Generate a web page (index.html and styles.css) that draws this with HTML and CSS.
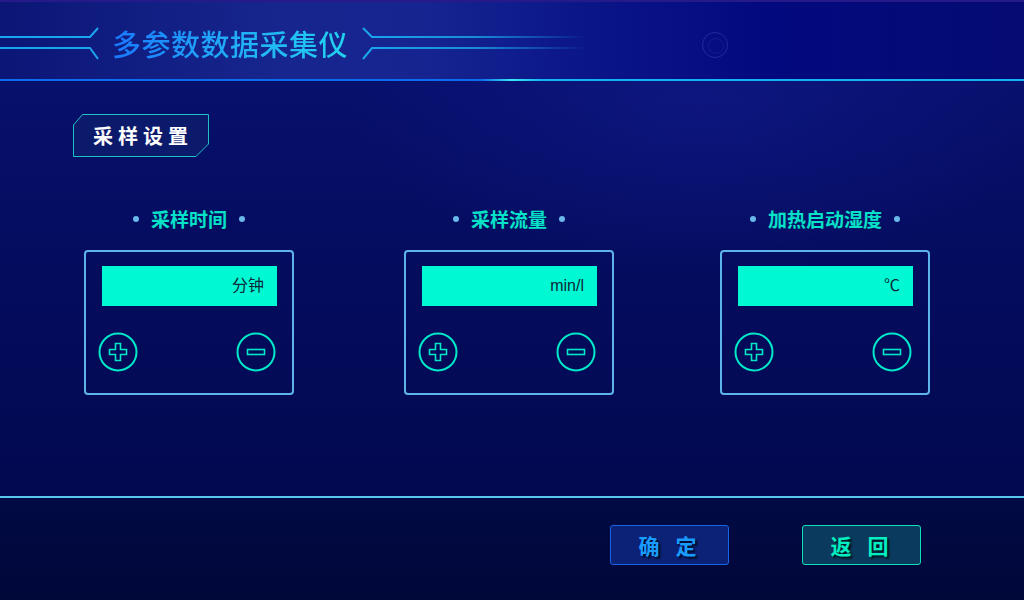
FILE: index.html
```html
<!DOCTYPE html>
<html lang="zh">
<head>
<meta charset="utf-8">
<title>多参数数据采集仪</title>
<link rel="stylesheet" href="styles.css">
</head>
<body>
<div class="screen">
  <header class="header">
    <svg class="deco-left" width="100" height="34" viewBox="0 0 100 34">
      <path d="M0 11 H90 L98 2 M0 22 H90 L98 33" fill="none" stroke="#1aa6ee" stroke-width="2"/>
    </svg>
    <h1 class="title">多参数数据采集仪</h1>
    <svg class="deco-right" width="225" height="34" viewBox="0 0 225 34">
      <defs>
        <linearGradient id="fade" x1="0" y1="0" x2="225" y2="0" gradientUnits="userSpaceOnUse">
          <stop offset="0" stop-color="#1aa6ee"/>
          <stop offset="0.5" stop-color="#1aa6ee" stop-opacity="0.8"/>
          <stop offset="1" stop-color="#1aa6ee" stop-opacity="0"/>
        </linearGradient>
      </defs>
      <path d="M1 2 L10 11 H225 M1 33 L10 22 H225" fill="none" stroke="url(#fade)" stroke-width="2"/>
    </svg>
    <span class="ring"></span>
  </header>
  <div class="hline"></div>

  <main class="main">
    <div class="tag">
      <svg class="tag-frame" width="136" height="43" viewBox="0 0 136 43">
        <polygon points="9.5,0.5 135.5,0.5 135.5,30 123,42.5 0.5,42.5 0.5,11" fill="#0c1a6c" stroke="#1ec2c2" stroke-width="1"/>
      </svg>
      <span class="tag-text">采样设置</span>
    </div>

    <div class="panels">
      <section class="panel">
        <h2 class="panel-title"><i class="dot"></i>采样时间<i class="dot"></i></h2>
        <div class="box">
          <div class="display">分钟</div>
          <div class="controls">
            <svg class="btn-icon" width="40" height="40" viewBox="0 0 40 40">
              <circle cx="20" cy="20" r="18.5" fill="none" stroke="#00e8c8" stroke-width="2"/>
              <path d="M17.5 11.5 H22.5 V17.5 H28.5 V22.5 H22.5 V28.5 H17.5 V22.5 H11.5 V17.5 H17.5 Z" fill="none" stroke="#00e8c8" stroke-width="1.6"/>
            </svg>
            <svg class="btn-icon" width="40" height="40" viewBox="0 0 40 40">
              <circle cx="20" cy="20" r="18.5" fill="none" stroke="#00e8c8" stroke-width="2"/>
              <rect x="11.5" y="17.5" width="17" height="5" fill="none" stroke="#00e8c8" stroke-width="1.6"/>
            </svg>
          </div>
        </div>
      </section>

      <section class="panel panel-mid">
        <h2 class="panel-title"><i class="dot"></i>采样流量<i class="dot"></i></h2>
        <div class="box">
          <div class="display">min/l</div>
          <div class="controls">
            <svg class="btn-icon" width="40" height="40" viewBox="0 0 40 40">
              <circle cx="20" cy="20" r="18.5" fill="none" stroke="#00e8c8" stroke-width="2"/>
              <path d="M17.5 11.5 H22.5 V17.5 H28.5 V22.5 H22.5 V28.5 H17.5 V22.5 H11.5 V17.5 H17.5 Z" fill="none" stroke="#00e8c8" stroke-width="1.6"/>
            </svg>
            <svg class="btn-icon" width="40" height="40" viewBox="0 0 40 40">
              <circle cx="20" cy="20" r="18.5" fill="none" stroke="#00e8c8" stroke-width="2"/>
              <rect x="11.5" y="17.5" width="17" height="5" fill="none" stroke="#00e8c8" stroke-width="1.6"/>
            </svg>
          </div>
        </div>
      </section>

      <section class="panel panel-last">
        <h2 class="panel-title"><i class="dot"></i>加热启动湿度<i class="dot"></i></h2>
        <div class="box">
          <div class="display">℃</div>
          <div class="controls">
            <svg class="btn-icon" width="40" height="40" viewBox="0 0 40 40">
              <circle cx="20" cy="20" r="18.5" fill="none" stroke="#00e8c8" stroke-width="2"/>
              <path d="M17.5 11.5 H22.5 V17.5 H28.5 V22.5 H22.5 V28.5 H17.5 V22.5 H11.5 V17.5 H17.5 Z" fill="none" stroke="#00e8c8" stroke-width="1.6"/>
            </svg>
            <svg class="btn-icon" width="40" height="40" viewBox="0 0 40 40">
              <circle cx="20" cy="20" r="18.5" fill="none" stroke="#00e8c8" stroke-width="2"/>
              <rect x="11.5" y="17.5" width="17" height="5" fill="none" stroke="#00e8c8" stroke-width="1.6"/>
            </svg>
          </div>
        </div>
      </section>
    </div>
  </main>

  <div class="fline"></div>
  <footer class="footer">
    <button class="btn btn-ok">确定</button>
    <button class="btn btn-back">返回</button>
  </footer>
</div>
</body>
</html>
```

FILE: styles.css
```css
* { box-sizing: border-box; }
html, body { margin: 0; padding: 0; }
body {
  width: 1024px;
  height: 600px;
  overflow: hidden;
  background: #020a50;
  font-family: "Noto Sans CJK SC", "Noto Sans", sans-serif;
}
.screen {
  width: 1024px;
  height: 600px;
  display: flex;
  flex-direction: column;
}

/* header */
.header {
  position: relative;
  height: 79px;
  padding-top: 5px;
  display: flex;
  align-items: center;
  border-top: 2px solid #26198a;
  background: linear-gradient(90deg, #0b1676 0%, #17268e 28%, #152490 42%, #0a1588 58%, #02097e 75%, #050b72 100%);
}
.deco-left { flex: none; }
.deco-right { flex: none; margin-left: 14px; }
.title {
  margin: 0 0 0 12px;
  font-size: 29px;
  font-weight: 500;
  line-height: 36px;
  letter-spacing: 0.5px;
  background: linear-gradient(90deg, #1a78ff 0%, #20a8f8 45%, #22d2ee 100%);
  -webkit-background-clip: text;
  background-clip: text;
  color: transparent;
}
.ring {
  position: absolute;
  left: 702px;
  top: 30px;
  width: 26px;
  height: 26px;
  border-radius: 50%;
  border: 1px solid rgba(70, 90, 190, 0.4);
}
.ring::after {
  content: "";
  position: absolute;
  left: 5px;
  top: 5px;
  width: 14px;
  height: 14px;
  border-radius: 50%;
  border: 1px solid rgba(60, 80, 170, 0.25);
}
.hline {
  height: 2px;
  background: linear-gradient(90deg, #0b6cf0 0%, #0b6cf0 47%, #38e8f4 50%, #12b4f2 53%, #12b4f2 100%);
}

/* main */
.main {
  height: 415px;
  padding: 33px 0 0 73px;
  background:
    radial-gradient(ellipse 500px 250px at 700px 20px, rgba(20, 30, 150, 0.45), transparent 70%),
    linear-gradient(180deg, #07106c 0%, #040c5e 45%, #020950 100%);
}
.tag {
  position: relative;
  width: 136px;
  height: 43px;
  display: flex;
  align-items: center;
  padding-left: 20px;
}
.tag-frame { position: absolute; left: 0; top: 0; }
.tag-text {
  position: relative;
  color: #ffffff;
  font-size: 20px;
  font-weight: 700;
  letter-spacing: 5px;
  line-height: 24px;
}

.panels {
  display: flex;
  margin: 50px 0 0 11px;
}
.panel-mid { margin-left: 110px; }
.panel-last { margin-left: 106px; }
.panel {
  width: 210px;
  display: flex;
  flex-direction: column;
  align-items: center;
}
.panel-title {
  margin: 0;
  display: flex;
  align-items: center;
  gap: 12px;
  font-size: 19px;
  font-weight: 700;
  line-height: 24px;
  color: #06e2c8;
}
.dot {
  width: 6px;
  height: 6px;
  border-radius: 50%;
  background: #6ab8ea;
}
.box {
  margin-top: 19px;
  width: 210px;
  height: 145px;
  border: 2px solid #5cb4ea;
  border-radius: 4px;
  padding: 14px 14px 0 12px;
}
.display {
  width: 175px;
  height: 40px;
  margin-left: 4px;
  background: #00f8d2;
  color: #0d2838;
  font-family: "Liberation Sans", "Noto Sans CJK SC", sans-serif;
  font-size: 16px;
  line-height: 40px;
  text-align: right;
  padding-right: 13px;
}
.controls {
  margin-top: 26px;
  display: flex;
  justify-content: space-between;
  padding-right: 2px;
}
.btn-icon { display: block; }

/* footer */
.fline {
  height: 2px;
  background: #5ac6ec;
}
.footer {
  flex: 1;
  display: flex;
  align-items: flex-start;
  gap: 73px;
  padding: 27px 0 0 610px;
  background: linear-gradient(180deg, #010a44 0%, #000739 100%);
}
.btn {
  width: 119px;
  height: 40px;
  border-radius: 3px;
  font-family: "Noto Sans CJK SC", sans-serif;
  font-size: 21px;
  font-weight: 700;
  letter-spacing: 16px;
  padding-left: 18px;
  text-shadow: 2px 2px 2px rgba(0, 0, 0, 0.7);
  cursor: pointer;
}
.btn-ok {
  background: #0b2276;
  border: 1px solid #1664e8;
  color: #1a9cff;
}
.btn-back {
  background: #0a3b5e;
  border: 1px solid #10e0b8;
  color: #00eec2;
}
```
